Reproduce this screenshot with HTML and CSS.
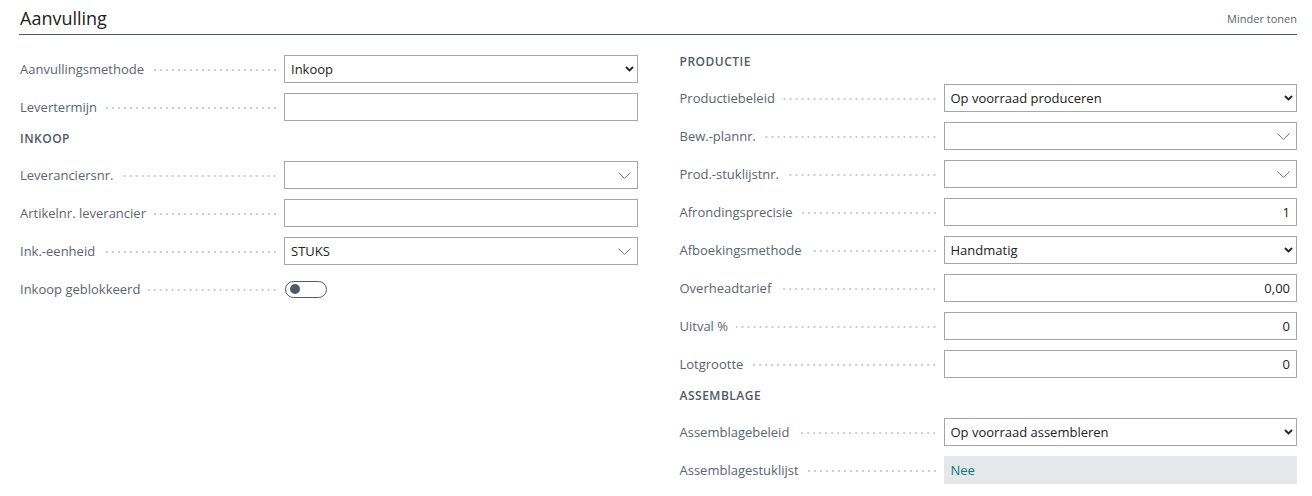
FILE: index.html
```html
<!DOCTYPE html>
<html lang="nl">
<head>
<meta charset="utf-8">
<title>Aanvulling</title>
<link rel="stylesheet" href="styles.css">
</head>
<body>
<div class="page">
  <div class="header">
    <h1 class="title">Aanvulling</h1>
    <a class="less">Minder tonen</a>
  </div>
  <div class="columns">
    <div class="col col-left">
      <div class="row"><span class="label">Aanvullingsmethode</span><div class="field select"><span class="val">Inkoop</span><svg class="chev-bold" width="9" height="6" viewBox="0 0 9 6"><path d="M1 1 L4.5 4.5 L8 1" fill="none" stroke="#222" stroke-width="1.8"/></svg></div></div>
      <div class="row"><span class="label">Levertermijn</span><div class="field"></div></div>
      <div class="group">INKOOP</div>
      <div class="row"><span class="label">Leveranciersnr.</span><div class="field lookup"><span class="val"></span><svg class="chev-thin" width="13" height="7" viewBox="0 0 13 7"><path d="M0.5 0.5 L6.5 6.5 L12.5 0.5" fill="none" stroke="#7a7a7a" stroke-width="1"/></svg></div></div>
      <div class="row"><span class="label">Artikelnr. leverancier</span><div class="field"></div></div>
      <div class="row"><span class="label">Ink.-eenheid</span><div class="field lookup"><span class="val">STUKS</span><svg class="chev-thin" width="13" height="7" viewBox="0 0 13 7"><path d="M0.5 0.5 L6.5 6.5 L12.5 0.5" fill="none" stroke="#7a7a7a" stroke-width="1"/></svg></div></div>
      <div class="row"><span class="label">Inkoop geblokkeerd</span><div class="togglewrap"><span class="toggle"><span class="knob"></span></span></div></div>
    </div>
    <div class="col">
      <div class="group">PRODUCTIE</div>
      <div class="row"><span class="label">Productiebeleid</span><div class="field select"><span class="val">Op voorraad produceren</span><svg class="chev-bold" width="9" height="6" viewBox="0 0 9 6"><path d="M1 1 L4.5 4.5 L8 1" fill="none" stroke="#222" stroke-width="1.8"/></svg></div></div>
      <div class="row"><span class="label">Bew.-plannr.</span><div class="field lookup"><span class="val"></span><svg class="chev-thin" width="13" height="7" viewBox="0 0 13 7"><path d="M0.5 0.5 L6.5 6.5 L12.5 0.5" fill="none" stroke="#7a7a7a" stroke-width="1"/></svg></div></div>
      <div class="row"><span class="label">Prod.-stuklijstnr.</span><div class="field lookup"><span class="val"></span><svg class="chev-thin" width="13" height="7" viewBox="0 0 13 7"><path d="M0.5 0.5 L6.5 6.5 L12.5 0.5" fill="none" stroke="#7a7a7a" stroke-width="1"/></svg></div></div>
      <div class="row"><span class="label">Afrondingsprecisie</span><div class="field num"><span class="val">1</span></div></div>
      <div class="row"><span class="label">Afboekingsmethode</span><div class="field select"><span class="val">Handmatig</span><svg class="chev-bold" width="9" height="6" viewBox="0 0 9 6"><path d="M1 1 L4.5 4.5 L8 1" fill="none" stroke="#222" stroke-width="1.8"/></svg></div></div>
      <div class="row"><span class="label">Overheadtarief</span><div class="field num"><span class="val">0,00</span></div></div>
      <div class="row"><span class="label">Uitval %</span><div class="field num"><span class="val">0</span></div></div>
      <div class="row"><span class="label">Lotgrootte</span><div class="field num"><span class="val">0</span></div></div>
      <div class="group">ASSEMBLAGE</div>
      <div class="row"><span class="label">Assemblagebeleid</span><div class="field select"><span class="val">Op voorraad assembleren</span><svg class="chev-bold" width="9" height="6" viewBox="0 0 9 6"><path d="M1 1 L4.5 4.5 L8 1" fill="none" stroke="#222" stroke-width="1.8"/></svg></div></div>
      <div class="row"><span class="label">Assemblagestuklijst</span><div class="field readonly"><span class="val link">Nee</span></div></div>
    </div>
  </div>
</div>
</body>
</html>
```

FILE: styles.css
```css
* { box-sizing: border-box; }
html, body { margin: 0; padding: 0; background: #fff; }
body {
  font-family: "Open Sans", "Noto Sans", "Liberation Sans", sans-serif;
  color: #212121;
}
.page { padding: 0 15px 0 19px; }
.header {
  display: flex;
  align-items: flex-end;
  justify-content: space-between;
  height: 35px;
  border-bottom: 1px solid #505a66;
  padding: 0 0 4px 1px;
}
.title {
  margin: 0;
  font-size: 18px;
  font-weight: 400;
  line-height: 24px;
  color: #212121;
}
.less {
  font-size: 11px;
  color: #5b6470;
  line-height: 16px;
  margin-bottom: 3px;
}
.columns {
  display: grid;
  grid-template-columns: 1fr 1fr;
  column-gap: 41px;
  padding-top: 14px;
}
.col { display: flex; flex-direction: column; }
.col-left { padding-top: 1px; }
.row {
  display: flex;
  align-items: center;
  height: 38px;
}
.label {
  flex: 0 0 265px;
  display: flex;
  align-items: center;
  font-size: 13px;
  color: #5b6470;
  padding-left: 1px;
  padding-right: 6px;
  white-space: nowrap;
}
.label::after {
  content: "";
  flex: 1;
  height: 2px;
  margin-left: 8px;
  margin-top: 2px;
  background-image: radial-gradient(circle, #c9ccd0 0.7px, transparent 0.9px);
  background-size: 6px 2px;
  background-repeat: repeat-x;
  background-position: right center;
}
.field {
  flex: 1;
  height: 28px;
  border: 1px solid #a5a5a5;
  background: #fff;
  display: flex;
  align-items: center;
  padding: 0 6px;
  font-size: 13px;
  color: #212121;
}
.field .val { flex: 1; white-space: nowrap; }
.field.select { padding-right: 3px; }
.field.lookup { padding-right: 6px; }
.field.num .val { text-align: right; }
.field.readonly {
  background: #e6e7e8;
  border-color: #e6e7e8;
}
.link { color: #00807f; }
.chev-bold { flex: 0 0 auto; }
.chev-thin { flex: 0 0 auto; }
.group {
  height: 30px;
  padding-top: 4px;
  line-height: 18px;
  font-size: 12px;
  font-weight: 600;
  letter-spacing: 0.5px;
  color: #505a66;
  padding-left: 1px;
}
.togglewrap { flex: 1; display: flex; align-items: center; }
.toggle {
  width: 42px;
  height: 17px;
  border: 1px solid #505a66;
  border-radius: 9px;
  display: flex;
  align-items: center;
  padding-left: 4px;
  margin-left: 1px;
}
.knob {
  width: 10px;
  height: 10px;
  border-radius: 50%;
  background: #505a66;
}
```
